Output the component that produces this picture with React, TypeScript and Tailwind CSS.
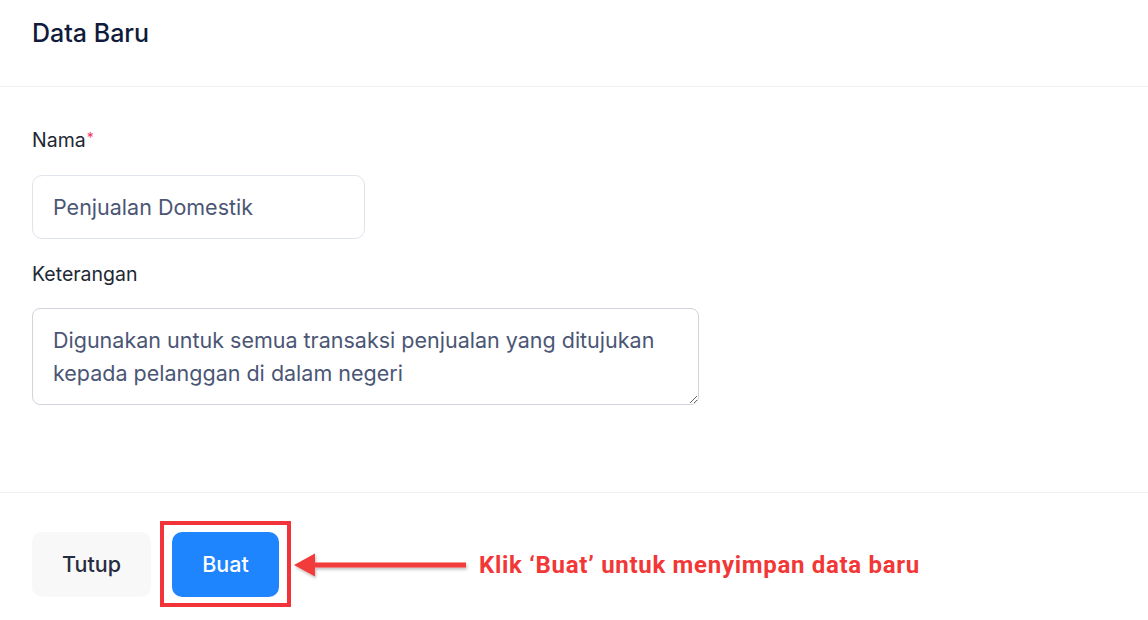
const FORM_FONT = { fontFamily: "Inter, 'Noto Sans', sans-serif" };

const ArrowLeft = () => (
  <svg width="178" height="34" viewBox="0 0 178 34" className="shrink-0">
    <defs>
      <filter id="arrowShadow" x="-10%" y="-50%" width="120%" height="200%">
        <feDropShadow dx="1" dy="2" stdDeviation="1.5" floodColor="#000" floodOpacity="0.25" />
      </filter>
    </defs>
    <g filter="url(#arrowShadow)">
      <rect x="18" y="14.5" width="156" height="5" fill="#f23a3a" />
      <polygon points="2,17 23,5.5 23,28.5" fill="#f23a3a" />
    </g>
  </svg>
);

export default function App() {
  return (
    <div className="w-[1148px] h-[620px] bg-white flex flex-col" style={FORM_FONT}>
      <div className="h-[87px] border-b border-[#eef0f3] px-8 pt-[17px]">
        <div className="text-[25px] leading-[32px] font-medium text-[#101b3b]">Data Baru</div>
      </div>

      <div className="h-[406px] border-b border-[#eef0f3] px-8 pt-[39px] flex flex-col">
        <div className="text-[19.5px] leading-[28px] text-[#222833]">
          Nama<sup className="text-[#f0346a] text-[14px] ml-[1px] relative -top-[4px]">*</sup>
        </div>
        <input
          readOnly
          defaultValue="Penjualan Domestik"
          className="mt-[21px] w-[333px] h-[64px] rounded-[10px] border border-[#dfe3ec] px-5 text-[21.5px] text-[#4b5675] outline-none"
        />
        <div className="mt-[21px] text-[19.5px] leading-[28px] text-[#222833]">Keterangan</div>
        <textarea
          readOnly
          defaultValue="Digunakan untuk semua transaksi penjualan yang ditujukan kepada pelanggan di dalam negeri"
          className="mt-[20px] w-[667px] h-[97px] rounded-[8px] border border-[#cfd4dd] px-5 pt-[15px] text-[21.5px] leading-[33px] text-[#4b5675] outline-none"
        />
      </div>

      <div className="flex items-center px-8 pt-[39px]">
        <button className="w-[119px] h-[65px] rounded-[10px] bg-[#f8f8f8] text-[21.5px] font-medium text-[#262d40]">
          Tutup
        </button>
        <div className="relative ml-[21px]">
          <button className="w-[107px] h-[65px] rounded-[10px] bg-[#1e85ff] text-[21.5px] font-medium text-white">
            Buat
          </button>
          <div className="absolute -left-[12px] -right-[12px] -top-[11px] -bottom-[10px] border-4 border-[#f2343a]" />
        </div>
        <div className="ml-[13px] flex items-center">
          <ArrowLeft />
          <span
            className="ml-[9px] text-[24px] font-bold tracking-[0.7px] text-[#f23737]"
            style={{ fontFamily: "Roboto, 'Liberation Sans', sans-serif" }}
          >
            Klik ‘Buat’ untuk menyimpan data baru
          </span>
        </div>
      </div>
    </div>
  );
}
